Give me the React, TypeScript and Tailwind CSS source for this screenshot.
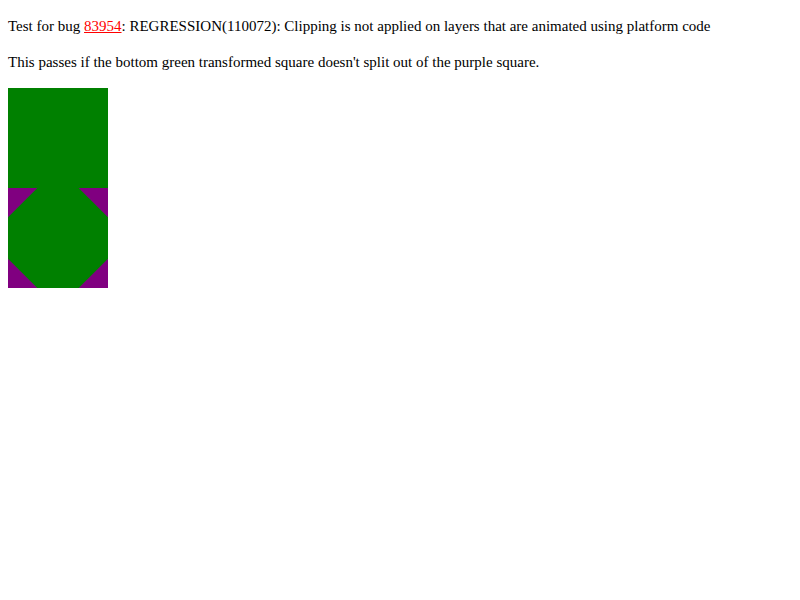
const App = () => {
    return (
        <div className="m-2 font-['Liberation_Serif',serif] text-[15px] leading-[20px] text-black">
            <p className="my-4">
                Test for bug <a href="#" className="text-[#ff0000] underline">83954</a>: REGRESSION(110072): Clipping is not applied on layers that are animated using platform code
            </p>
            <p className="my-4">This passes if the bottom green transformed square doesn't split out of the purple square.</p>

            <div className="w-[100px] h-[100px] bg-[#008000]"></div>
            <div className="w-[100px] h-[100px] bg-[#800080] overflow-hidden">
                <div className="w-[100px] h-[100px] bg-[#008000] rotate-45"></div>
            </div>
        </div>
    )
}

export default App;
